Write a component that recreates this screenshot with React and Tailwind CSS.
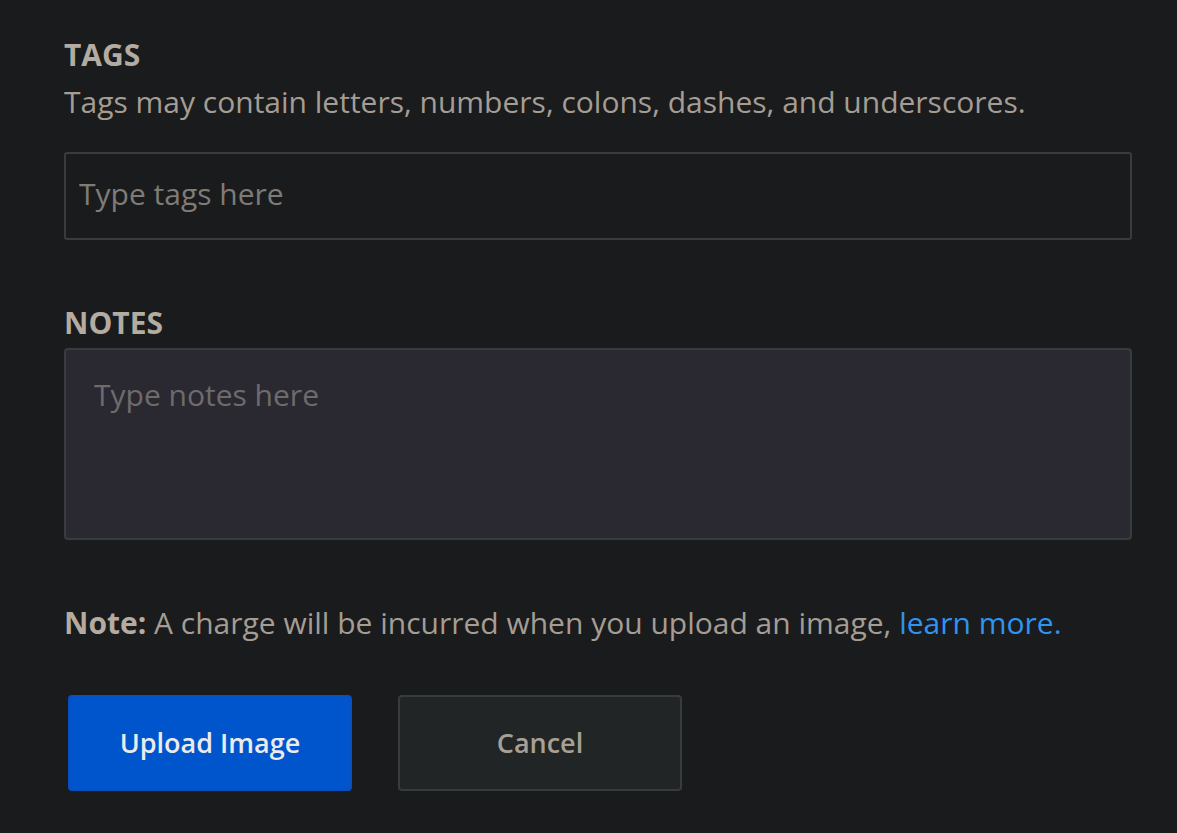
import React from "react";

const FONT = { fontFamily: "'Open Sans', 'Noto Sans', sans-serif" };

export default function App() {
  return (
    <div
      className="min-h-[833px] w-full bg-[#1a1b1d] px-[64px] pt-[35px]"
      style={FONT}
    >
      <div className="w-[1068px]">
        {/* Tags */}
        <h3 className="text-[30px] font-bold uppercase leading-[40px] text-[#b4aba1]">
          Tags
        </h3>
        <p className="mt-[7px] text-[30px] leading-[40px] text-[#a59d94]">
          Tags may contain letters, numbers, colons, dashes, and underscores.
        </p>
        <input
          type="text"
          placeholder="Type tags here"
          className="mt-[30px] block h-[88px] w-full rounded-[3px] border-2 border-[#393c3e] bg-[#1a1b1d] px-[13px] pb-[5px] text-[30px] text-[#b4aba1] outline-none placeholder:text-[#7f7b77]"
        />

        {/* Notes */}
        <h3 className="mt-[63px] text-[30px] font-bold uppercase leading-[40px] text-[#b4aba1]">
          Notes
        </h3>
        <textarea
          placeholder="Type notes here"
          className="mt-[5px] block h-[192px] w-full resize-none rounded-[4px] border-2 border-[#393c3f] bg-[#2a2932] px-[28px] py-[25px] text-[30px] leading-[40px] text-[#b4aba1] outline-none placeholder:text-[#6f6b6b]"
        />

        {/* Note */}
        <p className="mt-[63px] text-[30px] leading-[40px] text-[#a59d94]">
          <span className="font-bold text-[#b4aba1]">Note:</span> A charge
          will be incurred when you upload an image,{" "}
          <a href="#" className="text-[#2f94f0]">
            learn more.
          </a>
        </p>

        {/* Actions */}
        <div className="mt-[52px] flex gap-[46px] pl-[4px]">
          <button className="h-[96px] w-[284px] rounded-[4px] border-2 border-[#0a4fc0] bg-[#0055cc] text-[27px] font-semibold text-[#ebebeb]">
            Upload Image
          </button>
          <button className="h-[96px] w-[284px] rounded-[4px] border-2 border-[#393c3e] bg-[#222526] text-[27px] font-semibold text-[#a8a095]">
            Cancel
          </button>
        </div>
      </div>
    </div>
  );
}
